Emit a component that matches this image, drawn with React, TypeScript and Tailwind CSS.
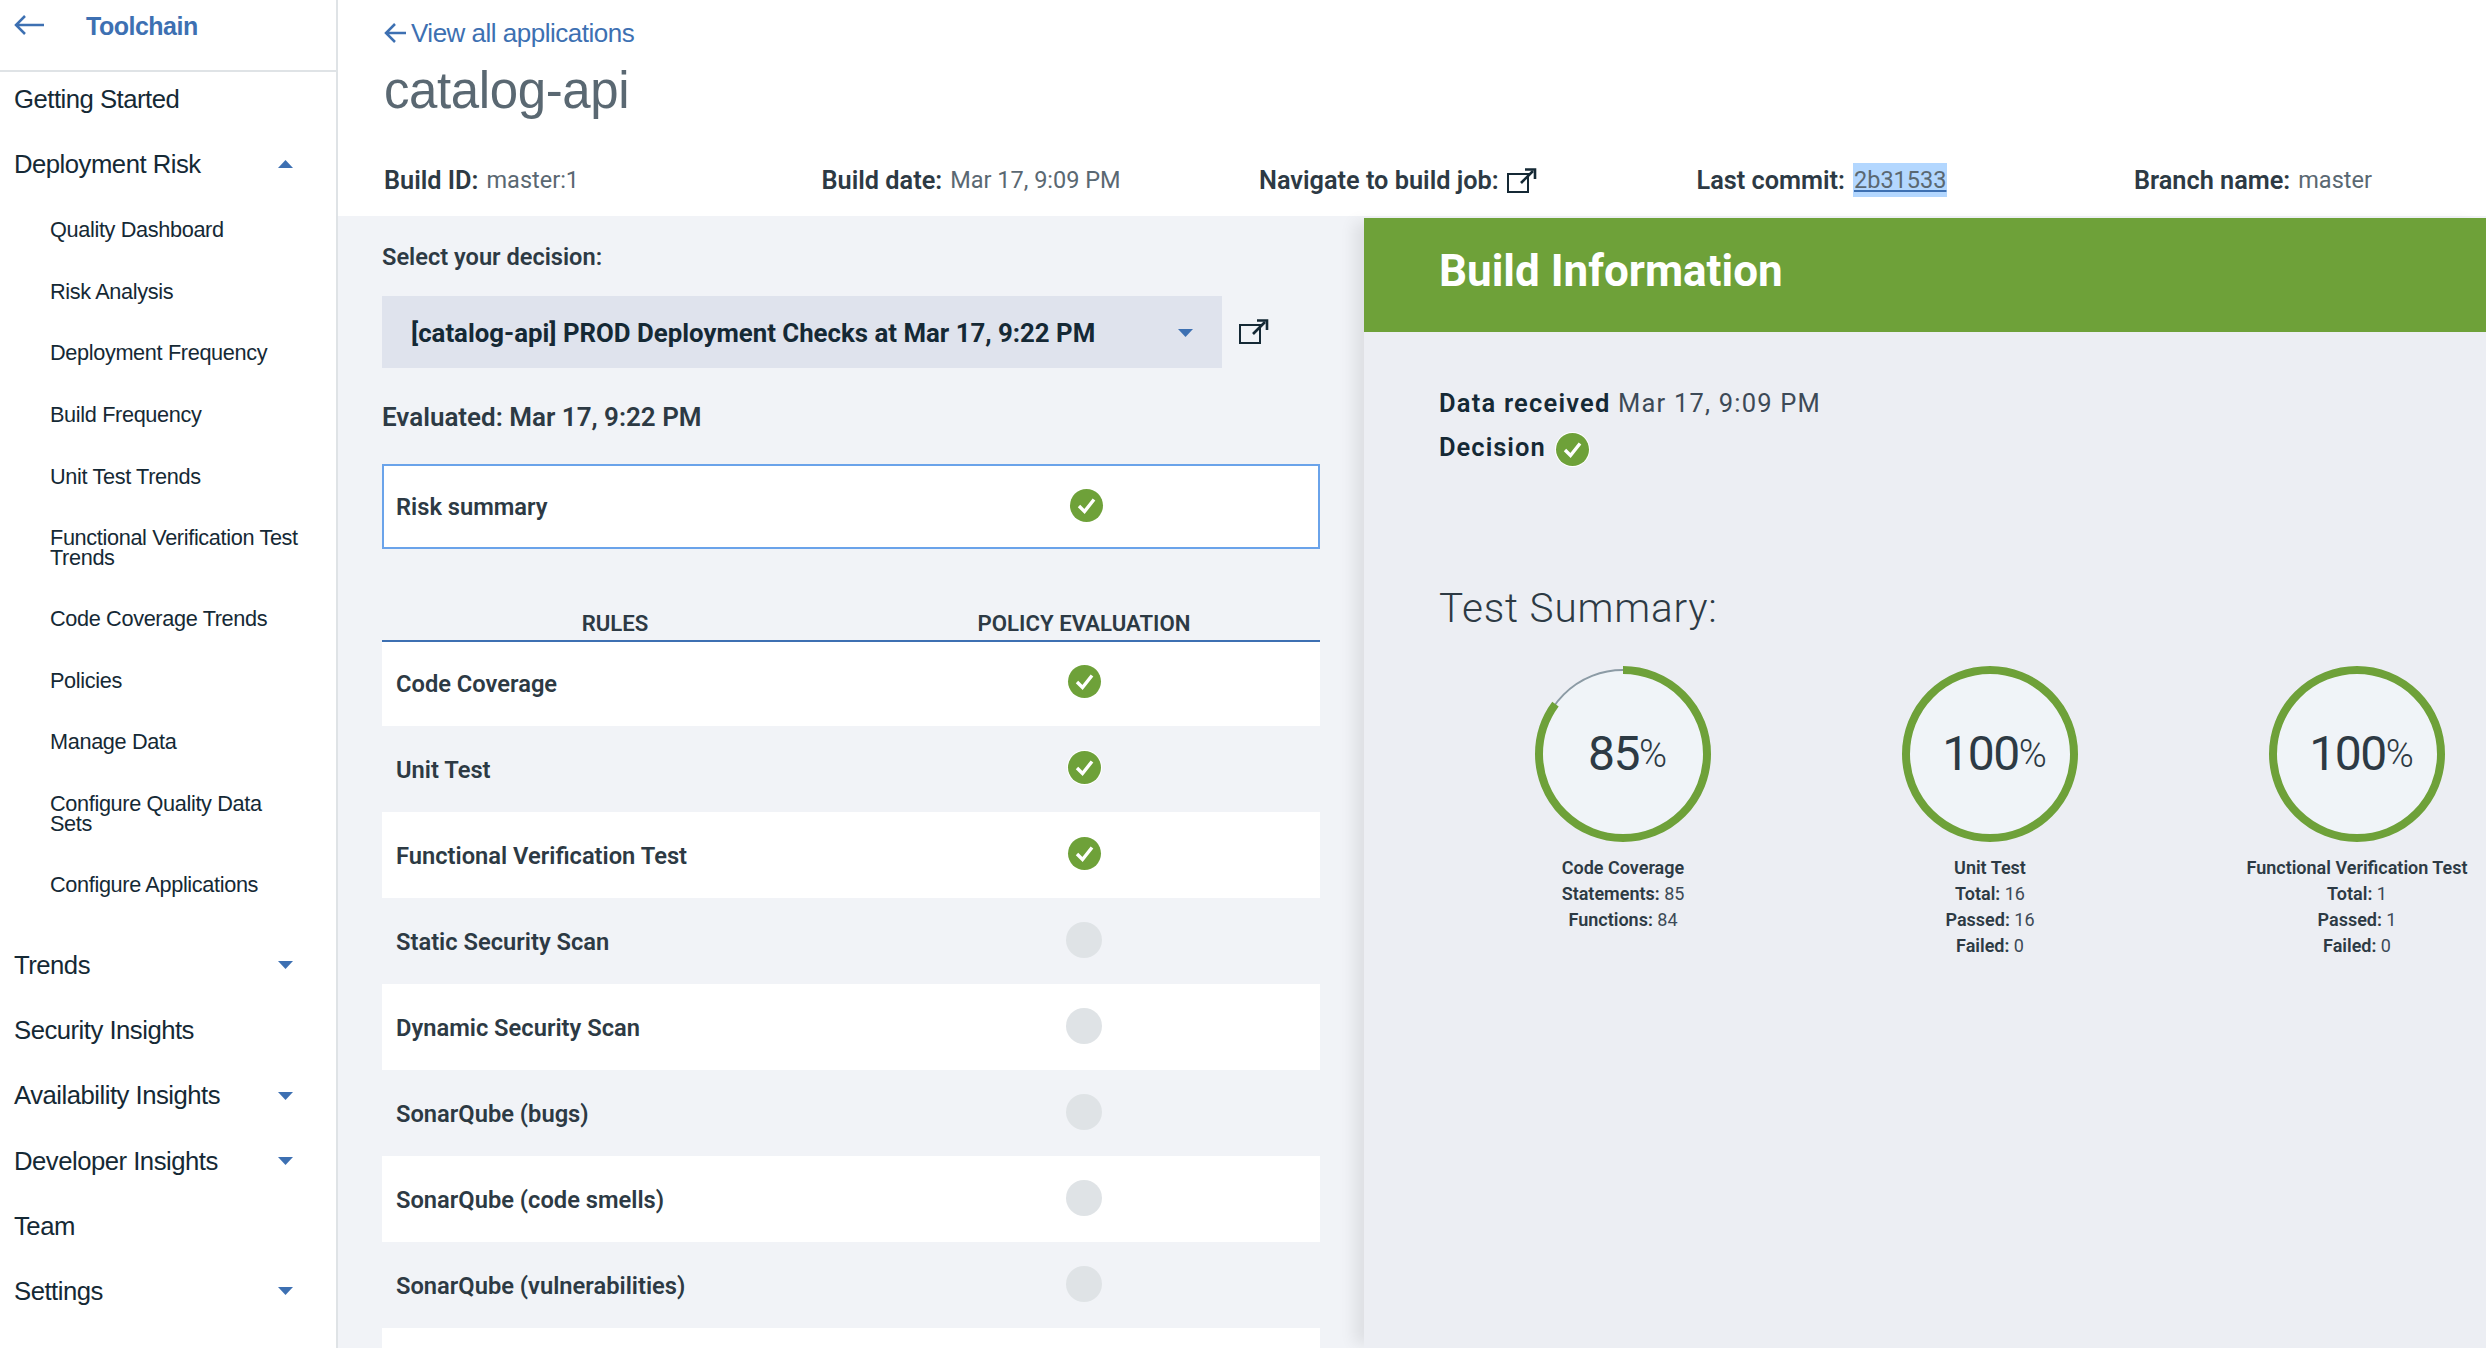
import type { ReactNode } from 'react';

const plex = "font-['Roboto',sans-serif]";

function Caret({ up = false, className = '' }: { up?: boolean; className?: string }) {
  return (
    <svg width="15" height="8" viewBox="0 0 15 8" className={className}>
      <polygon points={up ? '7.5,0 15,8 0,8' : '0,0 15,0 7.5,8'} fill="#3d70b2" />
    </svg>
  );
}

function Popout({ className = '' }: { className?: string }) {
  return (
    <svg width="30" height="25" viewBox="0 0 30 25" fill="none" className={className}>
      <rect x="1" y="6" width="20" height="18" stroke="#152935" strokeWidth="2" />
      <path d="M14 15 L26 3" stroke="#152935" strokeWidth="2.6" />
      <path d="M18 1.5 H28 V11" stroke="#152935" strokeWidth="2.6" />
    </svg>
  );
}

function Arrow({ width, className = '' }: { width: number; className?: string }) {
  return (
    <svg width={width} height="22" viewBox={`0 0 ${width} 22`} fill="none" className={className}>
      <path d={`M${width} 11 H2 M11 2 L2 11 L11 20`} stroke="#3d70b2" strokeWidth="2.5" />
    </svg>
  );
}

function Check() {
  return (
    <svg width="35" height="35" viewBox="0 0 35 35">
      <circle cx="17.5" cy="17.5" r="17.5" fill="#fff" />
      <circle cx="17.5" cy="17.5" r="16.5" fill="#6ea139" />
      <path d="M10 18 L15.5 23.5 L25 11.5" fill="none" stroke="#fff" strokeWidth="3.4" />
    </svg>
  );
}

function TopItem({ label, caret, up }: { label: string; caret?: boolean; up?: boolean }) {
  return (
    <div className="flex h-[65.2px] items-center justify-between pl-[14px] pr-[43px] text-[25.7px] tracking-[-0.5px] text-[#152935]">
      <span>{label}</span>
      {caret && <Caret up={up} />}
    </div>
  );
}

function SubItem({ children, tall }: { children: ReactNode; tall?: boolean }) {
  return (
    <div className={`flex items-center pl-[50px] pr-[30px] text-[21.7px] leading-[20px] tracking-[-0.35px] text-[#152935] ${tall ? 'h-[81px]' : 'h-[61.6px]'}`}>
      <span>{children}</span>
    </div>
  );
}

function Sidebar() {
  return (
    <aside className="flex h-full w-[338px] shrink-0 flex-col overflow-hidden border-r-[2px] border-[#dfe3e6] bg-white">
      <div className="flex h-[72px] shrink-0 items-start border-b-[2px] border-[#dfe3e6] pl-[14px] pt-[14px]">
        <Arrow width={30} />
        <span className="ml-[42px] text-[25px] leading-[24px] font-bold tracking-[-0.5px] text-[#3d70b2]">Toolchain</span>
      </div>
      <div className="-mt-[5.5px]">
        <TopItem label="Getting Started" />
        <TopItem label="Deployment Risk" caret up />
      </div>
      <div className="mt-[2.5px] mb-[17px]">
        <SubItem>Quality Dashboard</SubItem>
        <SubItem>Risk Analysis</SubItem>
        <SubItem>Deployment Frequency</SubItem>
        <SubItem>Build Frequency</SubItem>
        <SubItem>Unit Test Trends</SubItem>
        <SubItem tall>Functional Verification Test<br />Trends</SubItem>
        <SubItem>Code Coverage Trends</SubItem>
        <SubItem>Policies</SubItem>
        <SubItem>Manage Data</SubItem>
        <SubItem tall>Configure Quality Data<br />Sets</SubItem>
        <SubItem>Configure Applications</SubItem>
      </div>
      <TopItem label="Trends" caret />
      <TopItem label="Security Insights" />
      <TopItem label="Availability Insights" caret />
      <TopItem label="Developer Insights" caret />
      <TopItem label="Team" />
      <TopItem label="Settings" caret />
    </aside>
  );
}

function Meta({ label, children }: { label: string; children: ReactNode }) {
  return (
    <div className="flex w-[437.5px] shrink-0 items-center">
      <span className="text-[25.3px] font-semibold text-[#2d3a44]">{label}</span>
      <span className="ml-[8px] text-[23.5px] text-[#5a6872]">{children}</span>
    </div>
  );
}

const rules = [
  { name: 'Code Coverage', passed: true },
  { name: 'Unit Test', passed: true },
  { name: 'Functional Verification Test', passed: true },
  { name: 'Static Security Scan', passed: false },
  { name: 'Dynamic Security Scan', passed: false },
  { name: 'SonarQube (bugs)', passed: false },
  { name: 'SonarQube (code smells)', passed: false },
  { name: 'SonarQube (vulnerabilities)', passed: false },
  { name: '', passed: null },
];

function RulesTable() {
  return (
    <div className="mt-[61px]">
      <div className="relative z-10 -mb-[2px] flex h-[32px] items-center border-b-[2px] border-[#3d70b2] pb-[2px] text-[22.2px] font-semibold text-[#2d3a44]">
        <span className="w-[466px] text-center">RULES</span>
        <span className="w-[472px] text-center">POLICY EVALUATION</span>
      </div>
      {rules.map((rule, i) => (
        <div key={i} className={`flex h-[86px] items-center pl-[14px] text-[23.7px] font-semibold text-[#2d3a44] ${i % 2 === 0 ? 'bg-white' : ''}`}>
          <span className="w-[670.5px] shrink-0 pt-[3px]">{rule.name}</span>
          {rule.passed === true && <span className="-mt-[3px] flex"><Check /></span>}
          {rule.passed === false && <span className="-ml-[1px] -mt-[3px] h-[36px] w-[36px] rounded-full bg-[#dfe3e6]" />}
        </div>
      ))}
    </div>
  );
}

function Gauge({ value }: { value: number }) {
  const r = 84;
  const c = 2 * Math.PI * r;
  return (
    <div className="relative h-[176px] w-[176px]">
      <svg width="176" height="176" viewBox="0 0 176 176" className="-rotate-90">
        <circle cx="88" cy="88" r={r} fill="#f0f4f8" stroke="#8c9ba5" strokeWidth="2" />
        <circle cx="88" cy="88" r={r} fill="none" stroke="#6ea139" strokeWidth="8" strokeDasharray={`${(c * value) / 100} ${c}`} />
      </svg>
      <div className="absolute inset-0 flex items-center justify-center pl-[8px] text-[#2d3a44]">
        <span className="text-[48px] tracking-[-1.5px]">{value}</span>
        <span className="text-[38px] font-light tracking-[-1px]">%</span>
      </div>
    </div>
  );
}

function Stat({ label, value }: { label: string; value?: number }) {
  return (
    <p className="h-[26px] leading-[26px] whitespace-nowrap">
      <span className="font-semibold">{label}</span>
      {value !== undefined && <span className="text-[#3d4a57]"> {value}</span>}
    </p>
  );
}

function GaugeCard({ value, title, stats }: { value: number; title: string; stats: [string, number][] }) {
  return (
    <div className="flex w-[176px] flex-col items-center">
      <Gauge value={value} />
      <div className="mt-[13px] flex flex-col items-center text-[18px] text-[#2d3a44]">
        <Stat label={title} />
        {stats.map(([label, n]) => (
          <Stat key={label} label={label} value={n} />
        ))}
      </div>
    </div>
  );
}

function BuildPanel() {
  return (
    <section className="relative mt-[2px] flex-1 bg-[#eceef3] shadow-[-14px_0_14px_-4px_rgba(0,0,0,0.08)]">
      <div className="flex h-[114px] items-center bg-[#6ea139] pl-[75px] pb-[8px] text-[44px] font-bold text-white">
        Build Information
      </div>
      <div className="pl-[75px] pt-[53px]">
        <p className="h-[36px] text-[25.5px] leading-[36px] tracking-[1.2px] text-[#152935]">
          <span className="font-semibold">Data received</span> <span className="text-[#3d4a57]">Mar 17, 9:09 PM</span>
        </p>
        <div className="mt-[8px] flex h-[36px] items-center text-[25.5px] font-semibold tracking-[1px] text-[#152935]">
          Decision
          <span className="ml-[9px] mt-[4px] flex"><Check /></span>
        </div>
        <h2 className="mt-[118px] text-[40.5px] leading-[50px] font-light tracking-[0.8px] text-[#2d3a44]">Test Summary:</h2>
        <div className="mt-[33px] flex gap-[191px] pl-[96px]">
          <GaugeCard value={85} title="Code Coverage" stats={[['Statements:', 85], ['Functions:', 84]]} />
          <GaugeCard value={100} title="Unit Test" stats={[['Total:', 16], ['Passed:', 16], ['Failed:', 0]]} />
          <GaugeCard value={100} title="Functional Verification Test" stats={[['Total:', 1], ['Passed:', 1], ['Failed:', 0]]} />
        </div>
      </div>
    </section>
  );
}

export default function App() {
  return (
    <div className="flex h-[1348px] w-[2486px] overflow-hidden bg-white font-['Liberation_Sans',sans-serif]">
      <Sidebar />
      <main className="flex h-full min-w-0 flex-1 flex-col">
        <header className="h-[216px] shrink-0 pl-[46px]">
          <a className="flex items-center pt-[18px] text-[26px] leading-[30px] font-light tracking-[-0.5px] text-[#3d70b2]">
            <Arrow width={22} />
            <span className="ml-[5px]">View all applications</span>
          </a>
          <h1 className="mt-[13px] text-[51px] leading-[60px] tracking-[-0.4px] text-[#5a6872]">catalog-api</h1>
          <div className={`mt-[43px] flex h-[34px] items-center ${plex}`}>
            <Meta label="Build ID:">master:1</Meta>
            <Meta label="Build date:">Mar 17, 9:09 PM</Meta>
            <Meta label="Navigate to build job:"><Popout className="-mt-[2px]" /></Meta>
            <Meta label="Last commit:">
              <span className="bg-[#b3d7ff] px-[1px] py-[3px] underline decoration-[#3d70b2] decoration-2 underline-offset-2">2b31533</span>
            </Meta>
            <Meta label="Branch name:">master</Meta>
          </div>
        </header>
        <div className={`flex min-h-0 flex-1 bg-[#f1f3f7] ${plex}`}>
          <section className="w-[1026px] shrink-0 pl-[44px] pr-[44px] text-[#2d3a44]">
            <p className="pt-[26px] text-[23.6px] leading-[30px] font-semibold">Select your decision:</p>
            <div className="mt-[24px] flex items-center">
              <div className="flex h-[72px] w-[840px] items-center justify-between bg-[#dfe3ed] pl-[29px] pr-[29px] text-[25.8px] font-bold text-[#152935]">
                <span className="pt-[2px]">[catalog-api] PROD Deployment Checks at Mar 17, 9:22 PM</span>
                <Caret className="mt-[2px]" />
              </div>
              <Popout className="ml-[17px] -mt-[2px]" />
            </div>
            <p className="mt-[31px] text-[26px] leading-[36px] font-semibold">Evaluated: Mar 17, 9:22 PM</p>
            <div className="mt-[29px] flex h-[85px] items-center border-[2px] border-[#6aa3ea] bg-white pl-[12px] text-[23.7px] font-semibold">
              <span className="w-[672.5px] shrink-0 pt-[2px]">Risk summary</span>
              <span className="-mt-[2px] flex"><Check /></span>
            </div>
            <RulesTable />
          </section>
          <BuildPanel />
        </div>
      </main>
    </div>
  );
}
